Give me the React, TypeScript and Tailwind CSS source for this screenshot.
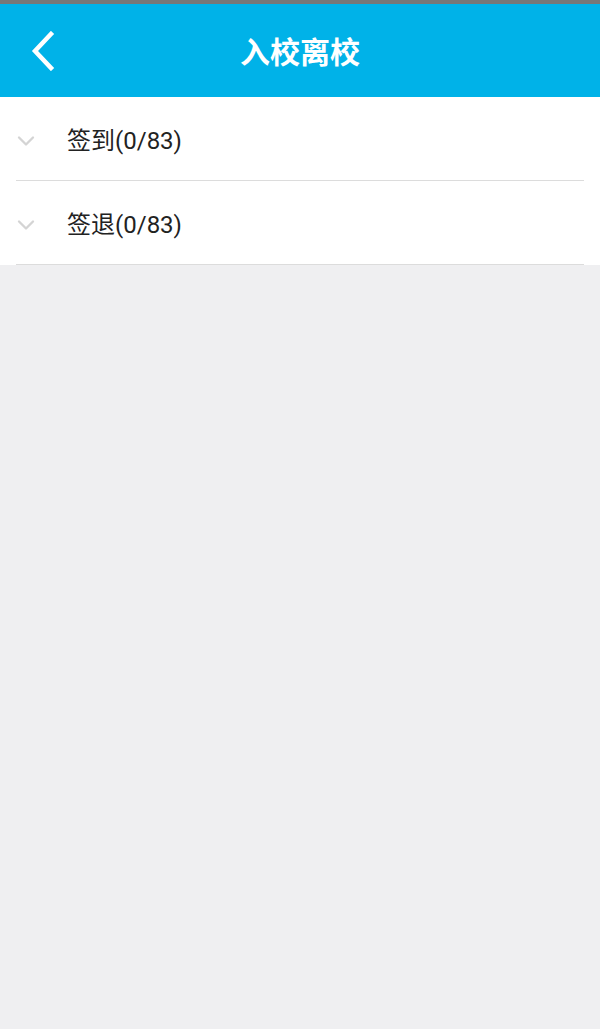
import { ChevronDown } from "lucide-react";

const rows = [
  { label: "签到", done: 0, total: 83 },
  { label: "签退", done: 0, total: 83 },
];

const App = () => {
  return (
    <div
      className="w-[600px] h-[1029px] bg-[#efeff1] flex flex-col"
      style={{ fontFamily: '"Roboto", "Noto Sans CJK SC", sans-serif' }}>
      <div className="h-[4px] bg-[#777777]" />
      <div className="h-[93px] bg-[#00b2e8] flex items-center relative">
        <button className="absolute left-[23px] top-[24px] w-[40px] h-[46px] flex items-center justify-center">
          <svg width="28" height="40" viewBox="0 0 28 40">
            <path
              d="M22 3 L6 20 L22 37"
              fill="none"
              stroke="white"
              strokeWidth="4.5"
              strokeLinecap="square"
            />
          </svg>
        </button>
        <h1 className="w-full text-center text-white text-[30px] font-bold leading-none pt-[4px]">
          入校离校
        </h1>
      </div>

      <ul className="bg-white">
        {rows.map((row) => (
          <li key={row.label} className="h-[84px] flex items-center relative pt-[3px]">
            <ChevronDown
              className="ml-[12px] text-[#d4d4d4]"
              size={28}
              strokeWidth={2}
            />
            <span className="ml-[27px] text-[24px] text-[#222222] leading-none">
              {row.label}({row.done}/{row.total})
            </span>
            <div className="absolute left-[16px] right-[16px] bottom-0 h-[1px] bg-[#dcdcdc]" />
          </li>
        ))}
      </ul>
    </div>
  );
};

export default App;
